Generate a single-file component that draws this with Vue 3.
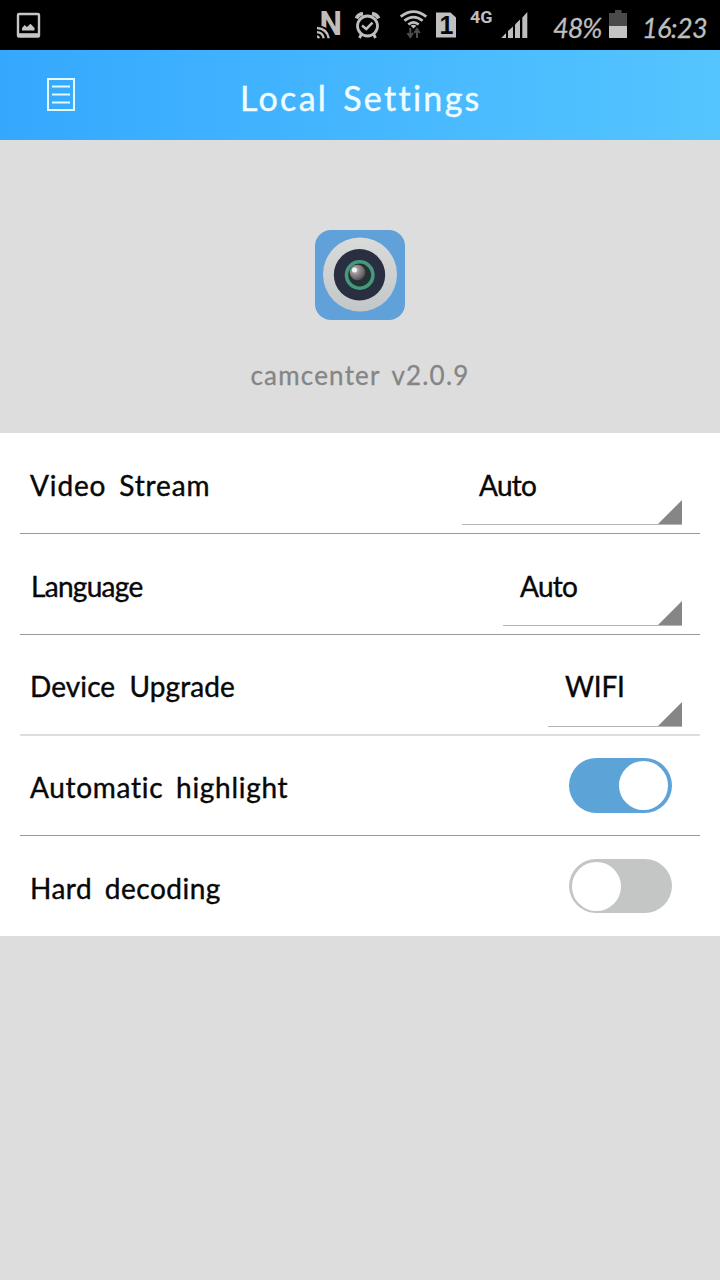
<script setup>
const rows = [
  { label: 'Video Stream', type: 'select', value: 'Auto', key: 'video' },
  { label: 'Language', type: 'select', value: 'Auto', key: 'language' },
  { label: 'Device Upgrade', type: 'select', value: 'WIFI', key: 'upgrade' },
  { label: 'Automatic highlight', type: 'switch', on: true, key: 'highlight' },
  { label: 'Hard decoding', type: 'switch', on: false, key: 'decoding' },
]
</script>

<template>
  <div class="screen">
    <div class="status">
      <svg class="status-icons" width="540" height="50" viewBox="0 0 540 50">
        <!-- picture notification -->
        <rect x="18" y="14" width="21" height="22.5" rx="1" fill="none" stroke="#c6c6c6" stroke-width="2.4" />
        <path d="M18 34.7H39" stroke="#c6c6c6" stroke-width="3" />
        <path d="M22 30.5V28.2L24.5 25L27 27L30.500 23.700L34.500 28V30.500Z" fill="#c6c6c6" />
        <!-- NFC -->
        <text x="319.500" y="34.800" class="glyph" font-size="34" textLength="22.500" lengthAdjust="spacingAndGlyphs">N</text>
        <path d="M315 26H322Q331 28 332 40H315Z" fill="#000" />
        <g fill="none" stroke="#bebebe" stroke-width="2.300">
          <path d="M317 36.500Q318.500 36.500 319 38.200" />
          <path d="M317 32.200Q322.500 32.400 323.700 38.200" />
          <path d="M317 28Q327 28.700 328.700 38.200" />
        </g>
        <!-- alarm -->
        <g fill="none" stroke="#bebebe">
          <circle cx="367.500" cy="26" r="10" stroke-width="2.800" />
          <path d="M356.500 18.500Q358 14.500 363 13.600M378.500 18.500Q377 14.500 372 13.600" stroke-width="3.800" />
          <path d="M362 25.500L366.300 29L372.500 22.700" stroke-width="2.500" />
          <path d="M361.500 34L359.500 38M373.500 34L375.500 38" stroke-width="2.800" />
        </g>
        <!-- Wi-Fi -->
        <g fill="none" stroke="#bebebe" stroke-width="2.700">
          <path d="M400.700 16.600Q413.500 6.500 426.300 16.600" />
          <path d="M404.400 20.800Q413.500 13.300 422.600 20.800" />
          <path d="M408.300 24.500Q413.500 20.100 418.700 24.500" />
        </g>
        <path d="M410.600 25.800Q413.500 23.500 416.400 25.800L413.500 28.600Z" fill="#bebebe" />
        <path d="M410.300 28V36M407.500 33L410.300 37L413 33M417 38V30M414.200 33L417 29L419.800 33" fill="none" stroke="#4d4d4d" stroke-width="2" />
        <!-- SIM -->
        <path d="M436 12.500H450.500L456 17.500V37.500H436Z" fill="#c0c0c0" />
        <text x="439.500" y="34" class="sim" font-size="25">1</text>
        <text x="470" y="23.300" class="glyph" font-size="17" textLength="22.500" lengthAdjust="spacingAndGlyphs">4G</text>
        <!-- signal -->
        <g fill="#bebebe">
          <path d="M501.300 38L506 33V38Z" />
          <path d="M508 31L513 26.500V38H508Z" />
          <path d="M515 24.500L520 19.500V38H515Z" />
          <path d="M522.300 17.500L527.300 12V38H522.300Z" />
        </g>
      </svg>
      <span class="percent">48%</span>
      <svg class="battery" width="18" height="28" viewBox="0 0 18 28">
        <path d="M0 3H6V0H12.500V3H18V16H0Z" fill="#4a4a4a" />
        <rect y="16" width="18" height="12" fill="#c4c4c4" />
      </svg>
      <span class="clock">16:23</span>
    </div>

    <header class="bar">
      <svg class="menu" width="28" height="33" viewBox="0 0 28 33" fill="none" stroke="#e2fbff" stroke-width="2">
        <rect x="1" y="1" width="26" height="31" />
        <path d="M5 8.500H23M5 16.500H23M5 24.500H23" />
      </svg>
      <h1 class="title">Local Settings</h1>
    </header>

    <section class="about">
      <svg width="90" height="90" viewBox="0 0 90 90">
        <defs>
          <linearGradient id="ring" x1="0" y1="0" x2="0" y2="1">
            <stop offset="0" stop-color="#dadbd9" />
            <stop offset="1" stop-color="#c3c7c9" />
          </linearGradient>
          <radialGradient id="pupil" cx="0.35" cy="0.35" r="0.7">
            <stop offset="0" stop-color="#d0cccc" />
            <stop offset="0.4" stop-color="#948e90" />
            <stop offset="1" stop-color="#4f4e54" />
          </radialGradient>
        </defs>
        <rect width="90" height="90" rx="16" fill="#5fa1d8" />
        <circle cx="45" cy="44.500" r="37" fill="url(#ring)" />
        <circle cx="44.500" cy="44.800" r="25.700" fill="#292f40" />
        <circle cx="44.700" cy="45" r="13.200" fill="#263136" stroke="#439b7b" stroke-width="3.600" />
        <circle cx="42.500" cy="42.500" r="7.800" fill="url(#pupil)" />
        <circle cx="39.500" cy="40" r="2.500" fill="#f4f4f4" />
      </svg>
      <div class="version">camcenter v2.0.9</div>
    </section>

    <main class="list">
      <div v-for="row in rows" :key="row.key" class="row" :class="row.key">
        <span class="label">{{ row.label }}</span>
        <div v-if="row.type === 'select'" class="select">
          <span class="value">{{ row.value }}</span>
          <svg class="corner" width="24" height="24" viewBox="0 0 24 24"><path d="M24 0V24H0Z" fill="#868686" /></svg>
        </div>
        <div v-else class="switch" :class="{ on: row.on }"><i class="knob"></i></div>
      </div>
    </main>
  </div>
</template>

<style>
body { margin: 0; background: #ddd; }
</style>

<style scoped>
.screen {
  width: 720px;
  height: 1280px;
  overflow: hidden;
  background: #dddddd;
  font-family: Lato, "Open Sans", sans-serif;
  color: #080808;
}
.status {
  display: flex;
  height: 50px;
  background: #000;
  color: #bebebe;
}
.status-icons { flex: none; }
.glyph { font-family: Roboto, sans-serif; font-weight: 700; fill: #bebebe; }
.sim { font-family: "Liberation Sans", sans-serif; font-weight: 700; fill: #080808; }
.percent, .clock {
  flex: none;
  font-size: 27px;
  font-style: italic;
  line-height: 55px;
  white-space: nowrap;
  -webkit-text-stroke: 0.3px currentColor;
}
.percent { width: 56px; margin-left: 13px; letter-spacing: -1px; }
.battery { flex: none; margin-top: 10px; }
.clock { margin-left: 15px; letter-spacing: -0.6px; }
.bar {
  display: flex;
  align-items: flex-start;
  height: 90px;
  background: linear-gradient(90deg, #35a8fe, #55c5fe);
  color: #effdff;
}
.menu { flex: none; margin: 28px 0 0 47px; }
.title {
  margin: 27px 0 0 165px;
  font-size: 34px;
  line-height: 42px;
  font-weight: 400;
  letter-spacing: 2.3px;
  word-spacing: 4px;
  white-space: nowrap;
  -webkit-text-stroke: 0.4px currentColor;
}
.about {
  display: flex;
  flex-direction: column;
  align-items: center;
  height: 203px;
  padding-top: 90px;
}
.version {
  margin-top: 38px;
  font-size: 26px;
  line-height: 34px;
  letter-spacing: 1.2px;
  word-spacing: 4px;
  color: #858585;
  white-space: nowrap;
  -webkit-text-stroke: 0.3px currentColor;
}
.list { background: #fff; padding: 0 20px; }
.row {
  display: flex;
  justify-content: space-between;
  box-sizing: border-box;
  height: 101px;
  padding: 0 18px 0 10px;
  border-bottom: 1px solid #999;
}
.label, .value {
  font-size: 28px;
  line-height: 36px;
  white-space: nowrap;
  -webkit-text-stroke: 0.4px currentColor;
}
.label { margin-top: 34px; word-spacing: 5px; letter-spacing: 0.85px; }
.language .label { letter-spacing: -0.7px; margin-left: 1px; }
.upgrade .label { margin-top: 33px; letter-spacing: 0.1px; word-spacing: 7px; }
.highlight .label { margin-top: 33px; letter-spacing: 0.7px; }
.decoding .label { letter-spacing: 0.5px; }
.upgrade { border-bottom: 2px solid #ddd; }
.highlight { height: 100px; padding-right: 28px; }
.decoding { height: 100px; padding-right: 28px; border-bottom: 0; }
.select {
  display: flex;
  justify-content: space-between;
  align-items: flex-end;
  box-sizing: border-box;
  height: 92px;
  border-bottom: 1px solid #b5b5b5;
}
.video .select { width: 220px; }
.language .select { width: 179px; }
.upgrade .select { width: 134px; }
.value { align-self: flex-start; margin: 34px 0 0 17px; letter-spacing: -0.7px; }
.upgrade .value { margin-top: 33px; letter-spacing: -0.2px; }
.corner { display: block; }
.switch {
  box-sizing: border-box;
  width: 103px;
  height: 55px;
  margin-top: 22px;
  padding: 3px;
  border-radius: 28px;
  background: #c4c6c6;
}
.decoding .switch { height: 54.500px; margin-top: 22.500px; }
.switch.on { padding-left: 50px; background: #5ca3d8; }
.knob { display: block; width: 49px; height: 49px; border-radius: 50%; background: #fff; }
</style>
